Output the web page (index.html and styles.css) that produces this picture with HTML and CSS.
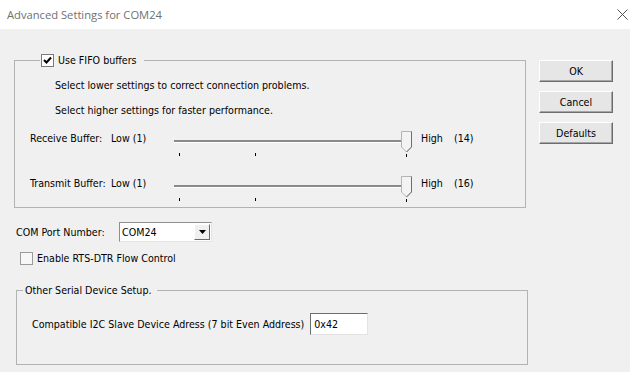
FILE: index.html
```html
<!DOCTYPE html>
<html lang="en">

<head>
    <meta charset="UTF-8">
    <title>Advanced Settings for COM24</title>
    <link rel="stylesheet" href="styles.css">
</head>

<body>
    <div class="titlebar">
        <span class="title">Advanced Settings for COM24</span>
        <svg class="close" width="11" height="11" viewBox="0 0 11 11">
            <path d="M0.5 0.5 L10.5 10.5 M10.5 0.5 L0.5 10.5" stroke="#555" stroke-width="1" fill="none" />
        </svg>
    </div>

    <div class="dialog">
        <div class="main">
            <!-- FIFO -->
            <fieldset class="group fifo">
                <legend class="fifo-legend">
                    <span class="check">
                        <svg width="11" height="11" viewBox="0 0 11 11">
                            <path d="M2 5 L4.5 7.5 L9 2.5" stroke="#000" stroke-width="2" fill="none" />
                        </svg>
                    </span>
                    Use FIFO buffers
                </legend>

                <div class="group-body">
                    <p class="hint">Select lower settings to correct connection problems.</p>
                    <p class="hint">Select higher settings for faster performance.</p>

                    <div class="slider-row">
                        <span class="slider-name">Receive Buffer:</span>
                        <span class="slider-low">Low (1)</span>
                        <svg class="slider" width="238" height="27" viewBox="0 0 238 27">
                            <rect x="0" y="9" width="230" height="2" fill="#8a8a8a" />
                            <rect x="0" y="11" width="230" height="1" fill="#ffffff" />
                            <rect x="5" y="22" width="1" height="3" fill="#000" />
                            <rect x="81" y="22" width="1" height="3" fill="#000" />
                            <rect x="232" y="23" width="1" height="3" fill="#000" />
                            <path d="M227.5 0.5 H237.5 V16 L232.5 21 L227.5 16 Z" fill="#f3f3f3" stroke="#b4b4b4" />
                            <path d="M237.5 0.5 V16 L232.5 21" fill="none" stroke="#6e6e6e" />
                        </svg>
                        <span class="slider-high">High</span>
                        <span class="slider-value">(14)</span>
                    </div>

                    <div class="slider-row second">
                        <span class="slider-name">Transmit Buffer:</span>
                        <span class="slider-low">Low (1)</span>
                        <svg class="slider" width="238" height="27" viewBox="0 0 238 27">
                            <rect x="0" y="9" width="230" height="2" fill="#8a8a8a" />
                            <rect x="0" y="11" width="230" height="1" fill="#ffffff" />
                            <rect x="5" y="22" width="1" height="3" fill="#000" />
                            <rect x="81" y="22" width="1" height="3" fill="#000" />
                            <rect x="232" y="23" width="1" height="3" fill="#000" />
                            <path d="M227.5 0.5 H237.5 V16 L232.5 21 L227.5 16 Z" fill="#f3f3f3" stroke="#b4b4b4" />
                            <path d="M237.5 0.5 V16 L232.5 21" fill="none" stroke="#6e6e6e" />
                        </svg>
                        <span class="slider-high">High</span>
                        <span class="slider-value">(16)</span>
                    </div>
                </div>
            </fieldset>

            <div class="port-row">
                <span class="port-label">COM Port Number:</span>
                <div class="combo">
                    <span class="combo-text">COM24</span>
                    <span class="combo-btn">
                        <svg width="7" height="4" viewBox="0 0 7 4">
                            <path d="M0 0 H7 L3.5 4 Z" fill="#000" />
                        </svg>
                    </span>
                </div>
            </div>

            <div class="rts-row">
                <span class="check empty"></span>
                <span>Enable RTS-DTR Flow Control</span>
            </div>

            <!-- Other device -->
            <fieldset class="group other">
                <legend class="other-legend">Other Serial Device Setup.</legend>
                <div class="group-body addr-row">
                    <span>Compatible I2C Slave Device Adress (7 bit Even Address)</span>
                    <span class="textbox">0x42</span>
                </div>
            </fieldset>
        </div>

        <div class="buttons">
            <button class="btn">OK</button>
            <button class="btn">Cancel</button>
            <button class="btn">Defaults</button>
        </div>
    </div>
</body>

</html>
```

FILE: styles.css
```css
* {
    box-sizing: border-box;
}

body {
    margin: 0;
    background-color: #f0f0f0;
    font-family: "DejaVu Sans Condensed", "DejaVu Sans", sans-serif;
    font-size: 10.6px;
    line-height: 14px;
    color: #000;
    overflow: hidden;
}

.titlebar {
    height: 29px;
    background: #fff;
    display: flex;
    align-items: center;
    justify-content: space-between;
    padding: 0 2px 0 7px;
}

.title {
    font-family: "Open Sans", sans-serif;
    font-size: 11.2px;
    color: #707070;
}

.close {
    display: block;
}

.dialog {
    display: flex;
    align-items: flex-start;
}

.main {
    width: 513px;
    margin-left: 14px;
}

/* GROUP BOXES */
.group {
    margin: 0;
    padding: 0;
    min-inline-size: 0;
    border: 1px solid #b3b3b3;
}

.group-body {
    padding-left: 15px;
}

.fifo {
    width: 512px;
    margin-top: 24px;
    padding-bottom: 4px;
}

.fifo-legend {
    display: flex;
    align-items: center;
    gap: 4px;
    margin-left: 25px;
    padding: 0 7px 0 1px;
    line-height: 14px;
}

.check {
    width: 13px;
    height: 13px;
    border: 1px solid #7a7a7a;
    background: #fff;
    display: flex;
    align-items: center;
    justify-content: center;
}

.check.empty {
    border-color: #9a9a9a;
    background: #f7f7f7;
}

.hint {
    margin: 11px 0 0 25px;
}

.slider-row {
    display: flex;
    align-items: flex-start;
    margin-top: 14px;
}

.slider-row.second {
    margin-top: 18px;
}

.slider-name {
    width: 81px;
}

.slider-low {
    width: 63px;
}

.slider {
    display: block;
}

.slider-high {
    margin-left: 9px;
    width: 33px;
}

/* COM PORT */
.port-row {
    display: flex;
    align-items: center;
    margin: 14px 0 0 2px;
}

.port-label {
    width: 103px;
}

.combo {
    width: 93px;
    height: 20px;
    display: flex;
    align-items: center;
    justify-content: space-between;
    background: #fff;
    border: 1px solid;
    border-color: #8e8e8e #e3e3e3 #e3e3e3 #8e8e8e;
    padding: 0 1px 0 2px;
}

.combo-btn {
    width: 16px;
    height: 16px;
    background: #f0f0f0;
    border: 1px solid;
    border-color: #fff #6a6a6a #6a6a6a #fff;
    display: flex;
    align-items: center;
    justify-content: center;
}

.rts-row {
    display: flex;
    align-items: center;
    gap: 4px;
    margin: 9px 0 0 6px;
}

.other {
    width: 512px;
    margin: 18px 0 0 2px;
    padding-bottom: 29px;
}

.other-legend {
    margin-left: 6px;
    padding: 0 6px 0 2px;
}

.addr-row {
    display: flex;
    align-items: center;
    gap: 6px;
    margin-top: 16px;
}

.textbox {
    width: 58px;
    height: 22px;
    background: #fff;
    border: 1px solid;
    border-color: #6e6e6e #e3e3e3 #e3e3e3 #6e6e6e;
    padding: 3px 3px 0;
}

/* BUTTONS */
.buttons {
    display: flex;
    flex-direction: column;
    gap: 9px;
    margin: 31px 0 0 12px;
}

.btn {
    width: 74px;
    height: 22px;
    font-family: inherit;
    font-size: 10.6px;
    color: #000;
    background: #e6e6e6;
    border: 1px solid;
    border-color: #fff #6d6d6d #6d6d6d #fff;
    box-shadow: inset -1px -1px 0 #a5a5a5;
    padding: 0;
}
```
